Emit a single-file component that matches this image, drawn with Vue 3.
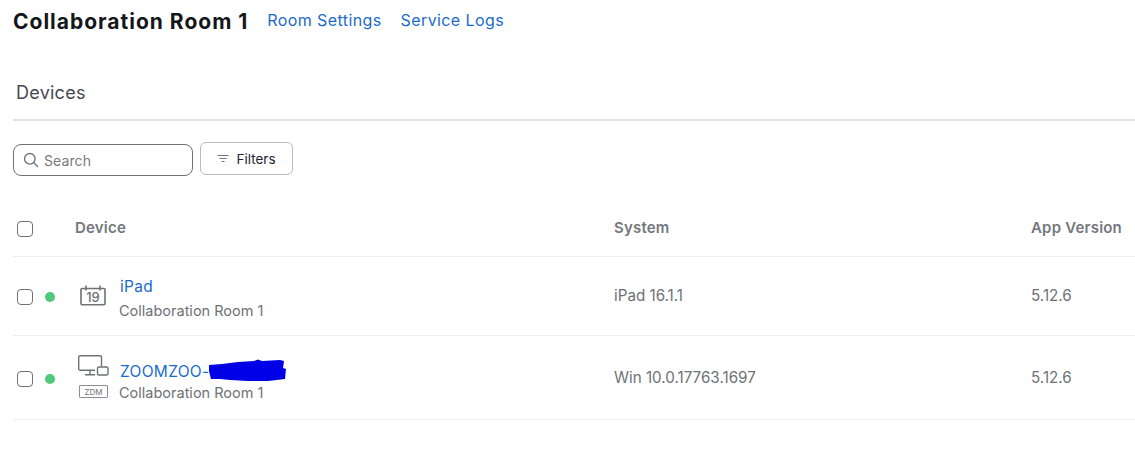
<script setup>
const rows = [
  { id: 'ipad', name: 'iPad', room: 'Collaboration Room 1', system: 'iPad 16.1.1', version: '5.12.6', icon: 'calendar' },
  { id: 'zoom', name: 'ZOOMZOO-', room: 'Collaboration Room 1', system: 'Win 10.0.17763.1697', version: '5.12.6', icon: 'desktop' }
]
</script>

<template>
  <div class="page">
    <header class="title-bar">
      <h1>Collaboration Room 1</h1>
      <a class="link">Room Settings</a>
      <a class="link">Service Logs</a>
    </header>

    <div class="tabs"><span>Devices</span></div>

    <div class="toolbar">
      <label class="search">
        <svg width="16" height="16" viewBox="0 0 16 16" fill="none" stroke="#6e7680" stroke-width="1.4" stroke-linecap="round">
          <circle cx="6.8" cy="6.8" r="5.3" />
          <path d="M10.8 10.8 14.6 14.6" />
        </svg>
        <span>Search</span>
      </label>
      <button class="filters">
        <svg width="12" height="10" viewBox="0 0 12 10" fill="none" stroke="#6e7680" stroke-width="1">
          <path d="M.5 1.500h11M2.500 4.500h7M4.500 7.500h3" />
        </svg>
        <span>Filters</span>
      </button>
    </div>

    <div class="row head">
      <span class="select"><i class="check"></i></span>
      <span class="label">Device</span>
      <span class="label">System</span>
      <span class="label">App Version</span>
    </div>

    <div v-for="r in rows" :key="r.id" class="row" :class="r.id">
      <span class="select">
        <i class="check"></i>
        <i class="dot"></i>
      </span>
      <div class="device">
        <div class="icon">
          <svg v-if="r.icon === 'calendar'" width="28" height="21" viewBox="0 0 28 21" fill="none" stroke="#6e7276" stroke-width="1.6">
            <path d="M4 3.500h22a1 1 0 0 1 1 1v14.200a1 1 0 0 1-1 1H4a1 1 0 0 1-1-1V4.500a1 1 0 0 1 1-1Z" />
            <path d="M8 .5v5M22 .5v5" />
            <text x="15" y="17" text-anchor="middle" class="cal">19</text>
          </svg>
          <template v-else>
            <svg width="31" height="21" viewBox="0 0 31 21" fill="none" stroke="#6e7276" stroke-width="1.4">
              <path d="M17 15.300H2.200a1.500 1.500 0 0 1-1.500-1.500V2.200A1.500 1.500 0 0 1 2.200.7H22a1.500 1.500 0 0 1 1.500 1.500v9" />
              <path d="M12 15.500v4M7 19.700h10" />
              <rect x="19.500" y="12" width="10.500" height="8" rx="1.500" />
            </svg>
            <span class="zdm">ZDM</span>
          </template>
        </div>
        <div class="names">
          <div class="name">
            <a class="link">{{ r.name }}</a>
            <svg v-if="r.id === 'zoom'" class="scribble" width="80" height="24" viewBox="0 0 80 24">
              <path fill="#0000e6" d="M1 6 14 5 30 3 46 2 50 .5 54 2 72 1 76 2 75 9 78 10 77 20 60 22 40 22 22 21 12 20 3 20 1 12Z" />
            </svg>
          </div>
          <div class="room">{{ r.room }}</div>
        </div>
      </div>
      <span class="cell">{{ r.system }}</span>
      <span class="cell">{{ r.version }}</span>
    </div>
  </div>
</template>

<style>
html, body { margin: 0; background: #fff; }
</style>

<style scoped>
.page {
  width: 1135px;
  height: 450px;
  box-sizing: border-box;
  padding-left: 13px;
  overflow: hidden;
  font-family: Inter, "Liberation Sans", sans-serif;
}
.title-bar {
  display: flex;
  align-items: center;
  height: 42px;
}
h1 {
  margin: 0 19px 0 0;
  font-size: 21px;
  font-weight: 700;
  letter-spacing: 1px;
  color: #15161a;
}
.link {
  color: #1c6bc8;
  font-size: 16px;
  letter-spacing: .4px;
  margin-right: 19px;
  margin-bottom: 2px;
}
.tabs {
  height: 79px;
  box-sizing: border-box;
  padding: 39px 0 0 3px;
  border-bottom: 2px solid #e2e2e2;
  font-size: 18px;
  letter-spacing: .25px;
  line-height: 24px;
  color: #45484f;
}
.toolbar {
  display: flex;
  align-items: flex-start;
  gap: 7px;
  margin-top: 21px;
}
.search {
  height: 30px;
  margin-top: 2px;
  display: flex;
  align-items: center;
  gap: 5px;
  padding-left: 9px;
  width: 169px;
  border: 1px solid #6e7276;
  border-radius: 8px;
  font-size: 14px;
  letter-spacing: .1px;
  color: #767a80;
}
.filters {
  display: flex;
  align-items: center;
  justify-content: center;
  gap: 7px;
  width: 93px;
  height: 33px;
  padding: 0;
  background: #fff;
  border: 1px solid #babac4;
  border-radius: 6px;
  font: inherit;
  font-size: 13.500px;
  color: #232333;
}
.row {
  display: grid;
  grid-template-columns: 62px 539px 417px 1fr;
  align-items: center;
  box-sizing: border-box;
  border-bottom: 1px solid #ededed;
  font-size: 14px;
}
.head {
  height: 81px;
  padding-top: 26px;
  font-weight: 600;
  font-size: 15px;
  letter-spacing: .2px;
  color: #74777d;
}
.label {
  margin-bottom: 3px;
}
.ipad { height: 79px; }
.zoom { height: 84px; }
.ipad .select,
.zoom .select {
  margin-top: 2px;
}
.select {
  display: flex;
  align-items: center;
  gap: 12px;
  padding-left: 4px;
}
.check {
  width: 14px;
  height: 14px;
  border: 1px solid #6e7276;
  border-radius: 4px;
}
.dot {
  width: 10px;
  height: 10px;
  border-radius: 50%;
  background: #4fc97c;
}
.device {
  display: flex;
  align-items: center;
}
.icon {
  width: 44px;
  flex: none;
  display: flex;
  flex-direction: column;
  gap: 9px;
  padding-left: 3px;
  box-sizing: border-box;
  margin-top: -3px;
}
.ipad .icon {
  margin-top: -2px;
}
.zdm {
  width: 29px;
  height: 13px;
  margin-left: 1px;
  box-sizing: border-box;
  border: 1px solid #8a8d92;
  border-radius: 1px;
  font-size: 8px;
  line-height: 12px;
  text-align: center;
  color: #6e7276;
}
.cal {
  font-family: Inter, sans-serif;
  font-size: 13px;
  font-weight: 500;
  fill: #6e7276;
  stroke: none;
}
.names {
  margin-top: 8px;
}
.ipad .names {
  margin-top: 4px;
}
.name {
  display: flex;
  align-items: center;
  height: 24px;
  padding-left: 1px;
}
.name .link {
  margin: 0;
  font-size: 15.500px;
  letter-spacing: .3px;
}
.scribble {
  margin-left: -1px;
}
.room {
  color: #6e7276;
  font-size: 14.500px;
  line-height: 22px;
}
.ipad .room {
  margin-top: 1px;
}
.zoom .room {
  margin-top: -1px;
}
.cell {
  color: #6e7276;
  font-size: 15.200px;
  margin-top: -1px;
}
</style>
